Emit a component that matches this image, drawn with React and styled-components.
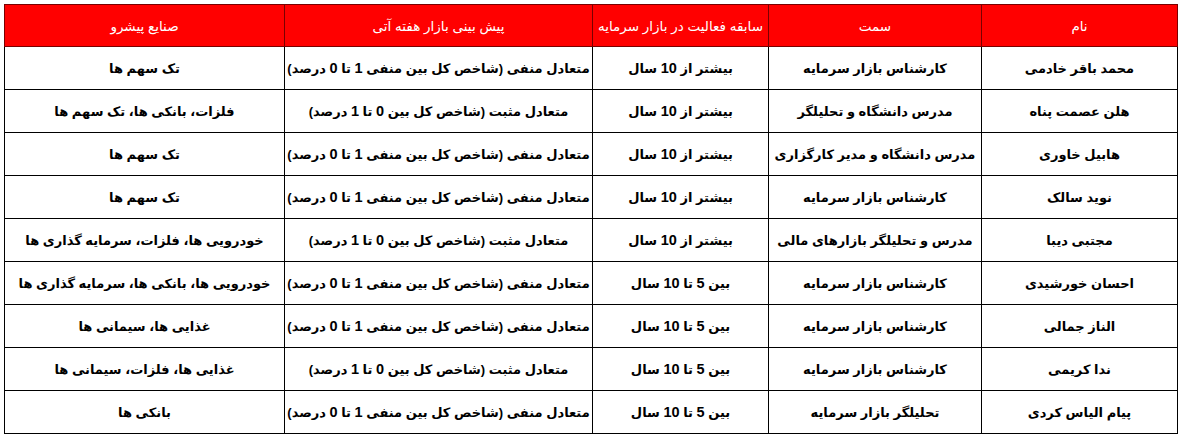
import React from 'react'
import styled, { createGlobalStyle } from 'styled-components';

const GlobalStyle = createGlobalStyle`
  body {
    margin: 0;
    background: #ffffff;
    font-family: 'Liberation Sans', 'DejaVu Sans', sans-serif;
  }
`;

const Page = styled.div`
  padding: 4px 4px 3px 4px;
  width: 1173px;
`;

const Table = styled.table`
  direction: rtl;
  width: 1173px;
  border-collapse: collapse;
  table-layout: fixed;
  border: 1px solid #000;
`;

const HeadCell = styled.th`
  height: 41px;
  padding: 0 1px;
  background: #ff0000;
  color: #ffffff;
  font-size: 13.5px;
  font-weight: normal;
  text-align: center;
  border: 1px solid #7a0000;
  white-space: nowrap;
`;

const Cell = styled.td`
  height: 42px;
  padding: 0 2px;
  color: #000;
  font-size: 13px;
  font-weight: bold;
  text-align: center;
  border: 1px solid #000;
  white-space: nowrap;
`;

const Num = styled.span`
  font-family: 'Liberation Sans', sans-serif;
  font-size: 14.5px;
  font-weight: bold;
`;

const columns = [
  { title: 'نام', width: 196 },
  { title: 'سمت', width: 213 },
  { title: 'سابقه فعالیت در بازار سرمایه', width: 176 },
  { title: 'پیش بینی بازار هفته آتی', width: 308 },
  { title: 'صنایع پیشرو', width: 280 },
];

const NEG = 'متعادل منفی (شاخص کل بین  منفی 1 تا 0 درصد)';
const POS = 'متعادل مثبت (شاخص کل بین 0 تا 1 درصد)';
const EXPERT = 'کارشناس بازار سرمایه';

const rows = [
  ['محمد باقر خادمی', EXPERT, 'بیشتر از 10 سال', NEG, 'تک سهم ها'],
  ['هلن عصمت پناه', 'مدرس دانشگاه و تحلیلگر', 'بیشتر از 10 سال', POS, 'فلزات، بانکی ها، تک سهم ها'],
  ['هابیل خاوری', 'مدرس دانشگاه و مدیر کارگزاری', 'بیشتر از 10 سال', NEG, 'تک سهم ها'],
  ['نوید سالک', EXPERT, 'بیشتر از 10 سال', NEG, 'تک سهم ها'],
  ['مجتبی دیبا', 'مدرس و تحلیلگر بازارهای مالی', 'بیشتر از 10 سال', POS, 'خودرویی ها، فلزات، سرمایه گذاری ها'],
  ['احسان خورشیدی', EXPERT, 'بین 5 تا 10 سال', NEG, 'خودرویی ها، بانکی ها، سرمایه گذاری ها'],
  ['الناز جمالی', EXPERT, 'بین 5 تا 10 سال', NEG, 'غذایی ها، سیمانی ها'],
  ['ندا کریمی', EXPERT, 'بین 5 تا 10 سال', POS, 'غذایی ها، فلزات، سیمانی ها'],
  ['پیام الیاس کردی', 'تحلیلگر بازار سرمایه', 'بین 5 تا 10 سال', 'متعادل منفی (شاخص کل بین منفی 1 تا 0 درصد)', 'بانکی ها'],
];

// latin digits are set a bit larger, like in the sheet
const withNumbers = (text) =>
  text.split(/(\d+)/).map((part, i) =>
    /^\d+$/.test(part) ? <Num key={i}>{part}</Num> : part
  );

const App = () => {
  return (
    <Page>
      <GlobalStyle />
      <Table>
        <colgroup>
          {columns.map((c) => (
            <col key={c.title} style={{ width: c.width }} />
          ))}
        </colgroup>
        <thead>
          <tr>
            {columns.map((c) => (
              <HeadCell key={c.title}>{c.title}</HeadCell>
            ))}
          </tr>
        </thead>
        <tbody>
          {rows.map((row, i) => (
            <tr key={i}>
              {row.map((text, j) => (
                <Cell key={j}>{withNumbers(text)}</Cell>
              ))}
            </tr>
          ))}
        </tbody>
      </Table>
    </Page>
  );
}

export default App;
